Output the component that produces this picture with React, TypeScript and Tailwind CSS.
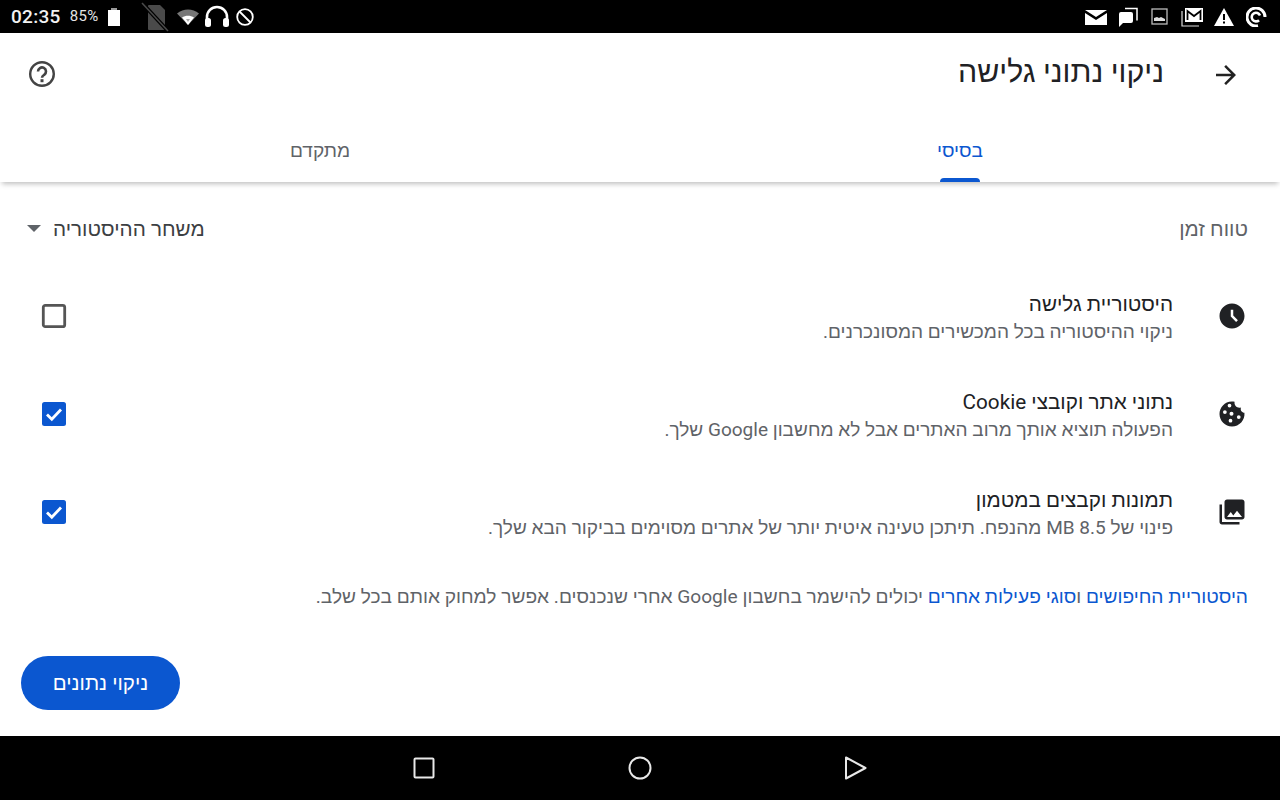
const FONT = "font-['Roboto','Noto_Sans','Liberation_Sans','DejaVu_Sans',sans-serif]";

const StatusBar = () => (
  <div dir="ltr" className="h-[33px] bg-black text-white flex items-center justify-between shrink-0">
    <div className="flex items-center">
      <span className="ml-[11px] text-[19px] font-medium leading-none text-[#f2f2f2] tracking-[0.3px]">02:35</span>
      <span className="ml-[9px] text-[15px] leading-none text-[#e4e4e4] tracking-[0.3px]">85%</span>
      <svg className="ml-[9px]" width="14" height="20" viewBox="0 0 14 20">
        <rect x="4" y="1" width="6" height="3" fill="#9a9a9a" />
        <rect x="1" y="3" width="12" height="16" fill="#fff" />
      </svg>
      <svg className="ml-[20px]" width="28" height="30" viewBox="0 0 28 30">
        <path d="M8 3h11l5 5v19a1 1 0 0 1-1 1H8a1 1 0 0 1-1-1V4a1 1 0 0 1 1-1z" fill="#4a4a4a" />
        <path d="M1 1l26 28" stroke="#000" strokeWidth="4" />
        <path d="M1 1l26 28" stroke="#4a4a4a" strokeWidth="1.500" />
      </svg>
      <svg className="ml-[7px]" width="24" height="18" viewBox="0 0 24 18">
        <path d="M1 5.500C7.500 0 16.500 0 23 5.500L12 17z" fill="#777" />
        <path d="M6 9.500c3.500-2.500 8.500-2.500 12 0L12 17z" fill="#fff" />
        <path d="M10 11h4l-2 3z" fill="#aaa" />
      </svg>
      <svg className="ml-[4px]" width="26" height="24" viewBox="0 0 26 24">
        <path d="M3 20v-8a10 10 0 0 1 20 0v8" fill="none" stroke="#fff" strokeWidth="2.600" />
        <rect x="1" y="13" width="6" height="9" rx="2.500" fill="#fff" />
        <rect x="19" y="13" width="6" height="9" rx="2.500" fill="#fff" />
      </svg>
      <svg className="ml-[6px]" width="18" height="18" viewBox="0 0 18 18">
        <circle cx="9" cy="9" r="7.800" fill="none" stroke="#fff" strokeWidth="1.800" />
        <path d="M3.500 3.500l11 11" stroke="#fff" strokeWidth="1.800" />
      </svg>
    </div>
    <div className="flex items-center mr-[13px]">
      <svg width="22" height="16" viewBox="0 0 22 16">
        <path d="M0 1h22L11 8z M0 4l11 7 11-7v12H0z" fill="#fff" />
      </svg>
      <svg className="ml-[11px]" width="20" height="20" viewBox="0 0 20 20">
        <path d="M7 1.500h12v12" fill="none" stroke="#fff" strokeWidth="1.500" />
        <path d="M1 7a2 2 0 0 1 2-2h10a2 2 0 0 1 2 2v7a2 2 0 0 1-2 2H5l-4 4z" fill="#fff" />
      </svg>
      <svg className="ml-[13px]" width="17" height="17" viewBox="0 0 17 17">
        <rect x="1" y="1" width="15" height="15" fill="none" stroke="#bbb" strokeWidth="1.300" />
        <path d="M3 13v-3l3-1 2 1 2-1 4 2v2z" fill="#ddd" />
      </svg>
      <svg className="ml-[13px]" width="23" height="20" viewBox="0 0 23 20">
        <path d="M1 4v15h17" fill="none" stroke="#ddd" strokeWidth="1.200" />
        <rect x="4" y="1" width="18" height="14" fill="#fff" />
        <path d="M6.500 13V4l6.500 5 6.500-5v9" fill="none" stroke="#000" strokeWidth="1.800" />
      </svg>
      <svg className="ml-[10px]" width="20" height="18" viewBox="0 0 20 18">
        <path d="M10 0l10 18H0z" fill="#fff" />
        <rect x="9" y="6" width="2" height="6" fill="#000" />
        <rect x="9" y="13.500" width="2" height="2" fill="#000" />
      </svg>
      <svg className="ml-[12px]" width="21" height="20" viewBox="0 0 21 20">
        <path d="M19 10A9 9 0 1 0 12 18.800" fill="none" stroke="#fff" strokeWidth="3" />
        <path d="M13 13.200A4.300 4.300 0 1 1 14 8.500" fill="none" stroke="#fff" strokeWidth="2.600" />
      </svg>
    </div>
  </div>
);

const Header = () => (
  <div className="h-[92px] shrink-0 flex justify-between pr-[39px] pl-[28px] pt-[25px]">
    <div className="flex items-start">
      <svg className="mt-[2px]" width="30" height="30" viewBox="0 0 24 24" fill="#222">
        <path d="M20 11H7.830l5.590-5.590L12 4l-8 8 8 8 1.410-1.410L7.830 13H20z" transform="matrix(-1 0 0 1 24 0)" />
      </svg>
      <span className="mr-[47px] -mt-[3px] text-[30.300px] leading-[34px] text-[#202124]">ניקוי נתוני גלישה</span>
    </div>
    <svg width="28" height="28" viewBox="0 0 28 28" fill="none" className="mt-[2px]">
      <circle cx="14" cy="14" r="11.800" stroke="#444" strokeWidth="2.400" />
      <path d="M10 11.500a4 4 0 1 1 6.200 3.300c-1.400 1-2.200 1.600-2.200 3" stroke="#444" strokeWidth="2.600" />
      <rect x="12.500" y="19.200" width="3" height="3" fill="#444" />
    </svg>
  </div>
);

const Tabs = () => (
  <div className="h-[57px] shrink-0 grid grid-cols-2 bg-white shadow-[0_4px_5px_-2px_rgba(0,0,0,0.25)] text-[19.100px] font-medium">
    <div className="flex flex-col items-center justify-between text-[#0b57d0]">
      <span className="mt-[13px] leading-[26px]">בסיסי</span>
      <span className="w-[40px] h-[4px] rounded-t-[4px] bg-[#0b57d0]" />
    </div>
    <div className="flex items-start justify-center text-[#5f6368]">
      <span className="mt-[13px] leading-[26px]">מתקדם</span>
    </div>
  </div>
);

const Row = ({ icon, title, sub, checked }: { icon: string; title: string; sub: string; checked: boolean }) => (
  <div className="h-[98px] flex items-center">
    <svg className="w-[30px] h-[30px] mr-[1px] ml-[44px] shrink-0" viewBox="0 0 24 24" fill="#202124" fillRule="evenodd">
      <path d={icon} />
    </svg>
    <div className="flex-1 min-w-0 pt-[4px]">
      <div className="text-[20.700px] leading-[27px] text-[#202124]">{title}</div>
      <div className="text-[19.050px] leading-[27px] text-[#5f6368]">{sub}</div>
    </div>
    {checked ? (
      <svg width="26" height="26" viewBox="0 0 26 26">
        <rect x="1" y="1" width="24" height="24" rx="2.500" fill="#0b57d0" />
        <path d="M6 13.500l4.800 4.800L20 8.500" fill="none" stroke="#fff" strokeWidth="2.800" />
      </svg>
    ) : (
      <svg width="26" height="26" viewBox="0 0 26 26">
        <rect x="2.300" y="2.300" width="21.400" height="21.400" rx="2" fill="none" stroke="#555" strokeWidth="2.800" />
      </svg>
    )}
  </div>
);

const NavBar = () => (
  <div dir="ltr" className="h-[64px] shrink-0 bg-black flex items-center justify-center gap-[192px]">
    <svg width="24" height="24" viewBox="0 0 24 24">
      <rect x="2.500" y="2.500" width="19" height="19" rx="1" fill="none" stroke="#e8e8e8" strokeWidth="2" />
    </svg>
    <svg width="24" height="24" viewBox="0 0 24 24">
      <circle cx="12" cy="12" r="10.500" fill="none" stroke="#e8e8e8" strokeWidth="2" />
    </svg>
    <svg width="24" height="24" viewBox="0 0 24 24">
      <path d="M2 1.500L21.500 12 2 22.500z" fill="none" stroke="#e8e8e8" strokeWidth="2" strokeLinejoin="round" />
    </svg>
  </div>
);

const clock =
  "M11.990 2C6.470 2 2 6.480 2 12s4.470 10 9.990 10C17.520 22 22 17.520 22 12S17.520 2 11.990 2zm3.300 14.710L11 12.410V7h2v4.590l3.710 3.710-1.420 1.410z";
const cookie =
  "M21.950 10.990c-1.790-.03-3.700-1.950-2.680-4.220-2.970 1-5.780-1.590-5.190-4.560C7.110.74 2 6.410 2 12c0 5.520 4.480 10 10 10 5.890 0 10.540-5.080 9.950-11.010zM10 3.700a1.500 1.500 0 1 0 0 3 1.500 1.500 0 0 0 0-3zM6.300 8.900a1.500 1.500 0 1 0 0 3 1.500 1.500 0 0 0 0-3zM11.600 10.100a1.600 1.600 0 1 0 0 3.200 1.600 1.600 0 0 0 0-3.200zM10.800 15.800a1.500 1.500 0 1 0 0 3 1.500 1.500 0 0 0 0-3zM17.400 12.900a1.500 1.500 0 1 0 0 3 1.500 1.500 0 0 0 0-3z";
const collections =
  "M22 16V4c0-1.100-.9-2-2-2H8c-1.100 0-2 .9-2 2v12c0 1.100.9 2 2 2h12c1.100 0 2-.9 2-2zm-11-4l2.030 2.710L16 11l4 5H8l3-4zM2 6v14c0 1.100.9 2 2 2h14v-2H4V6H2z";

export default function App() {
  return (
    <div dir="rtl" className={`w-[1280px] h-[800px] flex flex-col bg-white overflow-hidden ${FONT}`}>
      <StatusBar />
      <Header />
      <Tabs />
      <div className="flex-1 flex flex-col pr-[32px] pl-[27px]">
        <div className="h-[85px] pt-[34px] flex justify-between items-start text-[20.700px] leading-[26px]">
          <span className="text-[#5f6368]">טווח זמן</span>
          <div className="flex items-center text-[#3c4043] font-medium">
            <span>משחר ההיסטוריה</span>
            <svg className="mr-[12px]" width="14" height="8" viewBox="0 0 14 8">
              <path d="M0 0h14L7 7z" fill="#5f6368" />
            </svg>
          </div>
        </div>
        <div className="pl-[14px]">
          <Row icon={clock} title="היסטוריית גלישה" sub="ניקוי ההיסטוריה בכל המכשירים המסונכרנים." checked={false} />
          <Row
            icon={cookie}
            title="נתוני אתר וקובצי Cookie"
            sub="הפעולה תוציא אותך מרוב האתרים אבל לא מחשבון Google שלך."
            checked
          />
          <Row
            icon={collections}
            title="תמונות וקבצים במטמון"
            sub="פינוי של MB 8.5 מהנפח. תיתכן טעינה איטית יותר של אתרים מסוימים בביקור הבא שלך."
            checked
          />
        </div>
        <div className="mt-[23px] text-[19.150px] leading-[26px] text-[#5f6368]">
          <span className="text-[#0b57d0]">היסטוריית החיפושים</span> ו
          <span className="text-[#0b57d0]">סוגי פעילות אחרים</span> יכולים להישמר בחשבון Google אחרי שנכנסים. אפשר למחוק אותם בכל שלב.
        </div>
        <div className="flex justify-end mt-[46px] -ml-[6px]">
          <div className="w-[159px] h-[54px] rounded-full bg-[#0b57d0] text-white text-[20.500px] font-medium flex items-center justify-center">
            ניקוי נתונים
          </div>
        </div>
      </div>
      <NavBar />
    </div>
  );
}
